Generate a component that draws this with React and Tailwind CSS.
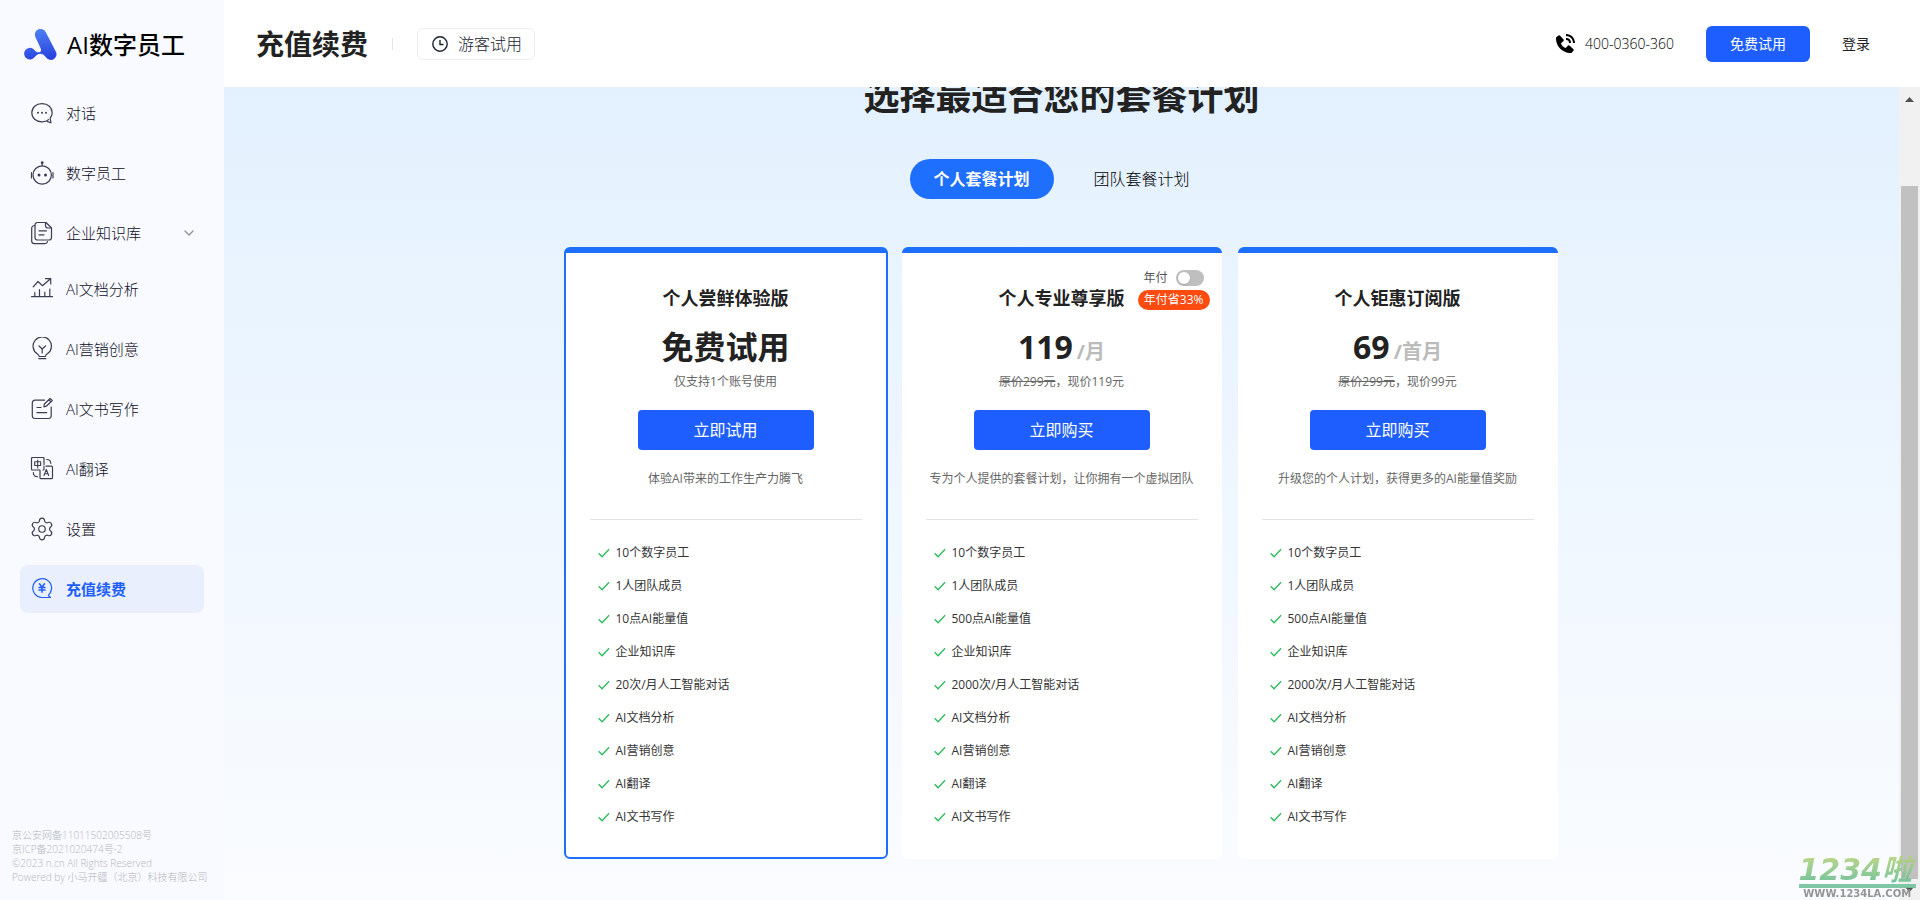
import { useState } from 'react'
import { ChevronDown, Settings } from 'lucide-react'
import { BiSolidPhoneCall } from 'react-icons/bi'

const NAV = [
  { id: 'chat',      label: '对话',       icon: ChatIcon },
  { id: 'staff',     label: '数字员工',   icon: RobotIcon },
  { id: 'knowledge', label: '企业知识库', icon: DocsIcon, children: true },
  { id: 'analysis',  label: 'AI文档分析', icon: ChartIcon },
  { id: 'marketing', label: 'AI营销创意', icon: BulbIcon },
  { id: 'writing',   label: 'AI文书写作', icon: EditIcon },
  { id: 'translate', label: 'AI翻译',     icon: TranslateIcon },
  { id: 'settings',  label: '设置',       icon: GearIcon },
  { id: 'recharge',  label: '充值续费',   icon: RechargeIcon },
]

const PLANS = [
  {
    id: 'trial', name: '个人尝鲜体验版', price: '免费试用', note: '仅支持1个账号使用', action: '立即试用',
    desc: '体验AI带来的工作生产力腾飞',
    features: ['10个数字员工', '1人团队成员', '10点AI能量值', '企业知识库', '20次/月人工智能对话', 'AI文档分析', 'AI营销创意', 'AI翻译', 'AI文书写作'],
  },
  {
    id: 'pro', name: '个人专业尊享版', price: '119', unit: '/月', was: '原价299元', note: '，现价119元', action: '立即购买', yearly: true,
    desc: '专为个人提供的套餐计划，让你拥有一个虚拟团队',
    features: ['10个数字员工', '1人团队成员', '500点AI能量值', '企业知识库', '2000次/月人工智能对话', 'AI文档分析', 'AI营销创意', 'AI翻译', 'AI文书写作'],
  },
  {
    id: 'sub', name: '个人钜惠订阅版', price: '69', unit: '/首月', was: '原价299元', note: '，现价99元', action: '立即购买',
    desc: '升级您的个人计划，获得更多的AI能量值奖励',
    features: ['10个数字员工', '1人团队成员', '500点AI能量值', '企业知识库', '2000次/月人工智能对话', 'AI文档分析', 'AI营销创意', 'AI翻译', 'AI文书写作'],
  },
]

function Icon({ children }) {
  return (
    <svg className="size-6 shrink-0 text-[#3b3c53] group-aria-[current=page]:text-[#1e5eff]" viewBox="0 0 24 24" fill="none" stroke="currentColor" strokeWidth="1.2" strokeLinecap="round" strokeLinejoin="round" aria-hidden="true">
      {children}
    </svg>
  )
}

function ChatIcon() {
  return (
    <Icon>
      <path d="M18.6 18.6C16.9 20.200 14.6 20.800 12 20.800 6 20.800 1.8 17 1.8 11.800S6 2.600 12 2.600 22.200 6.600 22.200 11.800c0 2-.7 3.700-2.100 5.300l.9 4.700-3.600-1.200"/>
      <g fill="currentColor" stroke="none"><circle cx="8" cy="11.8" r="1"/><circle cx="12" cy="11.8" r="1"/><circle cx="16" cy="11.8" r="1"/></g>
    </Icon>
  )
}

function RobotIcon() {
  return (
    <Icon>
      <circle cx="12.2" cy="14" r="9.2"/>
      <path d="M12.200 4.500V1.500M1.500 11.500v5.500M23 11.500v5.500"/>
      <g fill="currentColor" stroke="none"><circle cx="12.2" cy="1.7" r="1.4"/><circle cx="9" cy="14" r="1.5"/><circle cx="15.5" cy="14" r="1.5"/></g>
    </Icon>
  )
}

function DocsIcon() {
  return (
    <Icon>
      <path d="M16 1.500H7.500A2.500 2.500 0 0 0 5 4v12.500A2.500 2.500 0 0 0 7.500 19H19a2.500 2.500 0 0 0 2.500-2.500V7Z"/>
      <path d="M15.500 1.500v3A2.500 2.500 0 0 0 18 7h3.500"/>
      <path d="M5 4.500C3 4.500 1.700 5.500 1.700 7.500V20c0 1.800 1 2.700 2.700 2.700h10.500c1.300 0 2.300-.7 2.600-2"/>
      <path d="M9 9.800h7.500M9 13.800h5"/>
    </Icon>
  )
}

function ChartIcon() {
  return (
    <Icon>
      <path d="M1.500 19.700h21M4.800 19.500v-4M9.500 19.500V12.500M14.800 19.500v-4.500M19.800 19.500v-7.500"/>
      <path d="M3.200 9.800 8 4.500l4.500 4.200L20.500 1.800M15.500 1.700h5.200V7"/>
    </Icon>
  )
}

function BulbIcon() {
  return (
    <Icon>
      <path d="M9.200 19.500c-.3-1.300-.9-1.900-2-2.700A9.200 9.200 0 1 1 17.300 16.800c-1.100.8-1.700 1.400-2 2.700Z"/>
      <path d="M8.800 21.700h7M12.200 16v-4M9 9l3.200 3L15.500 9"/>
    </Icon>
  )
}

function EditIcon() {
  return (
    <Icon>
      <path d="M14.500 3.200H5A2.700 2.700 0 0 0 2.300 6v13A2.700 2.700 0 0 0 5 21.500h13.500A2.700 2.700 0 0 0 21.200 19V10"/>
      <path d="m14 9.200.4-2.200L20 1.500l2.300 2-6 5.700-2.300.6ZM18.700 2.800l2.300 2"/>
      <path d="M7 10.500h4M7 15.700h9.700"/>
    </Icon>
  )
}

function TranslateIcon() {
  return (
    <Icon>
      <path d="M10 13H2.500a1 1 0 0 1-1-1V1.500a1 1 0 0 1 1-1H13a1 1 0 0 1 1 1V7.500M14 9v3a1 1 0 0 1-1 1M16 9.200h5.500a1 1 0 0 1 1 1V20.700a1 1 0 0 1-1 1H11a1 1 0 0 1-1-1V13"/>
      <path d="M16.800 2.500c2.200 0 3.900 1.500 4 3.800M3.300 15.700c.2 2.300 1.700 3.900 4 4"/>
      <path d="M4.700 4.800h6v3.700h-6ZM7.700 3v8M14 18.500l2.300-6 2.400 6M14.800 16.700h3.100" strokeWidth="1.1"/>
    </Icon>
  )
}

function GearIcon() {
  return <Settings className="-mx-px size-[26px] shrink-0 text-[#3b3c53]" strokeWidth={1.1} aria-hidden="true"/>
}

function RechargeIcon() {
  return (
    <Icon>
      <path d="M18.800 17.800A9.400 9.400 0 1 0 12 20.500h8.500l-2-1.800M20.300 15.500a9.400 9.400 0 0 0 .8-2.500"/>
      <path d="m9.500 6.800 2.500 3.500 2.500-3.500M12 10.300v5M9 10.500h6M9 13h6" strokeWidth="1.5"/>
    </Icon>
  )
}

function ClockIcon() {
  return (
    <svg className="size-4" viewBox="0 0 16 16" fill="none" stroke="currentColor" strokeWidth="1.4" aria-hidden="true">
      <circle cx="8" cy="8" r="7.2"/>
      <path d="M8 4v4.500h3.500"/>
    </svg>
  )
}

function Logo() {
  return (
    <svg className="h-[31px] w-[33px]" viewBox="0 0 33 31" aria-hidden="true">
      <defs>
        <linearGradient id="logo" gradientUnits="userSpaceOnUse" x1="14" y1="0" x2="20" y2="31">
          <stop offset="0" stopColor="#4f80f2"/>
          <stop offset="1" stopColor="#2742df"/>
        </linearGradient>
      </defs>
      <path fill="url(#logo)" d="M11.500 8.200A5.700 5.700 0 0 1 21.700 3L31.500 22A5.600 5.600 0 0 1 22.200 28.500C20.500 26.200 18.500 24.800 16.300 24.800 14 24.800 12.500 26 10.500 28.200A5.800 5.800 0 1 1 9.300 19.900C11.300 21.800 12.500 23.300 14.500 23.300 16.600 23.300 17.600 21.600 16.700 19.500Z"/>
    </svg>
  )
}

function Sidebar() {
  return (
    <aside className="flex w-56 shrink-0 flex-col bg-[#f9faff]">
      <a href="#home" className="flex h-[89px] items-center gap-2.5 pl-6 text-2xl font-medium text-black">
        <Logo/>
        AI数字员工
      </a>
      <nav className="flex flex-col gap-3 px-5">
        {NAV.map(({ id, label, icon: NavIcon, children }) => (
          <a key={id} href={`#${id}`} aria-current={id === 'recharge' ? 'page' : undefined}
            className={`group flex h-12 items-center gap-3 rounded-lg pr-[7px] pl-2.5 text-[15px] ${id === 'recharge' ? 'bg-[#e9effc] font-bold text-[#1e5eff]' : 'font-light text-[#0c0d26]'} ${children ? '-mb-1' : ''}`}>
            <NavIcon/>
            {label}
            {children && <ChevronDown className="ml-auto size-4 text-[#8f909d]" aria-hidden="true"/>}
          </a>
        ))}
      </nav>
      <footer className="mt-auto pb-4 pl-3 text-[10px] leading-[14px] font-light whitespace-nowrap text-[#b4b5b9]">
        <p>京公安网备11011502005508号</p>
        <p>京ICP备2021020474号-2</p>
        <p>©2023 n.cn All Rights Reserved</p>
        <p>Powered by 小马开疆（北京）科技有限公司</p>
      </footer>
    </aside>
  )
}

function Header() {
  return (
    <header className="flex h-[87px] shrink-0 items-center bg-white pr-[50px] pl-8 text-[#222]">
      <h1 className="text-[28px] font-bold">充值续费</h1>
      <span className="mx-6 h-3 w-px bg-[#e2e3e6]"/>
      <button className="flex h-8 items-center gap-2.5 rounded-md border border-[#ececee] pr-3 pl-3.5 text-base font-light text-[#1a2230]">
        <ClockIcon/>
        游客试用
      </button>
      <div className="ml-auto flex items-center text-sm">
        <BiSolidPhoneCall className="mr-2 size-6 text-black" aria-hidden="true"/>
        <span className="font-light text-black">400-0360-360</span>
        <button className="mx-8 h-9 w-26 rounded-md bg-[#1e5eff] text-white">免费试用</button>
        <a href="#login">登录</a>
      </div>
    </header>
  )
}

function PlanCard({ plan, selected, onSelect }) {
  const [yearly, setYearly] = useState(false)
  return (
    <section onClick={onSelect}
      className={`relative rounded-md border-t-6 border-[#1f6fff] bg-white px-6 pt-8 text-center ${selected ? '-mx-0.5 border-x-2 border-b-2 pb-6' : 'pb-[26px]'}`}>
      {plan.yearly && (
        <div className="absolute top-[17px] right-3 flex flex-col items-end gap-1 text-xs leading-5">
          <label className="mr-1.5 flex h-4 items-center gap-2 text-[#555]">
            年付
            <input type="checkbox" checked={yearly} onChange={e => setYearly(e.target.checked)}
              className="h-4 w-7 appearance-none rounded-full bg-[#bfbfbf] before:m-0.5 before:block before:size-3 before:rounded-full before:bg-white before:shadow before:content-[''] checked:bg-[#1e5eff] checked:before:ml-3.5"/>
          </label>
          <span className="rounded-full bg-[#ff4a10] px-1.5 text-white">年付省33%</span>
        </div>
      )}
      <h3 className="text-lg leading-[26px] font-bold text-[#222]">{plan.name}</h3>
      <div className="mt-4 flex h-10 items-baseline justify-center gap-1 text-[32px] leading-10 font-bold text-[#222]">
        {plan.price}
        {plan.unit && <span className="text-xl leading-none text-[#bbb]">{plan.unit}</span>}
      </div>
      <p className="mt-1 text-xs leading-[22px] text-[#666]">
        {plan.was && <s>{plan.was}</s>}{plan.note}
      </p>
      <button className="mt-[17px] h-10 w-44 rounded bg-[#1e5eff] text-base text-white">{plan.action}</button>
      <p className="mt-5 text-xs leading-[18px] whitespace-nowrap text-[#666]">{plan.desc}</p>
      <hr className="mt-[31px] border-[#e2e2e2]"/>
      <ul className="mt-4 pl-2 text-left text-xs leading-[33px] text-[#333]">
        {plan.features.map(f => (
          <li key={f} className="flex items-center gap-1.5">
            <svg className="size-3" viewBox="0 0 12 12" fill="none" stroke="#2dbb5d" strokeWidth="1.3" aria-hidden="true">
              <path d="m.6 6.300 3.500 3.500 7-7.600"/>
            </svg>
            {f}
          </li>
        ))}
      </ul>
    </section>
  )
}

function ScrollBar() {
  return (
    <div className="flex w-[21px] shrink-0 flex-col items-center bg-[#f1f1f1]" aria-hidden="true">
      <svg className="mt-2.5 mb-21 h-[5px] w-[9px]" viewBox="0 0 9 5" fill="#505050"><path d="M0 5 4.500 0 9 5Z"/></svg>
      <div className="w-[17px] flex-1 bg-[#c1c1c1]"/>
      <svg className="my-2 h-[5px] w-[9px]" viewBox="0 0 9 5" fill="#505050"><path d="M0 0 4.500 5 9 0Z"/></svg>
    </div>
  )
}

function SiteMark() {
  return (
    <div className="absolute right-1 bottom-0 flex flex-col items-center opacity-90">
      <div className="bg-linear-to-b from-[#b5d27a] to-[#62bd92] bg-clip-text pr-1 font-['DejaVu_Sans','Noto_Sans_CJK_SC',sans-serif] text-[30px] leading-7 font-bold whitespace-nowrap text-transparent italic">1234啦</div>
      <div className="h-1 w-full bg-[#72c39a]"/>
      <div className="font-['DejaVu_Sans',sans-serif] text-[10px] leading-3 font-bold text-[#8a8a8a]">WWW.1234LA.COM</div>
    </div>
  )
}

export default function App() {
  const [tab, setTab]           = useState('personal')
  const [selected, setSelected] = useState('trial')

  return (
    <div className="relative flex h-screen overflow-hidden font-['Open_Sans','Noto_Sans_CJK_SC',sans-serif]">
      <Sidebar/>
      <div className="flex min-w-0 flex-1 flex-col">
        <Header/>
        <div className="flex min-h-0 flex-1">
          <main className="min-w-0 flex-1 overflow-hidden bg-linear-to-b from-[#e3f1fe] to-[#fafcff]">
            <h2 className="-mt-4 text-center text-4xl leading-[52px] font-bold text-[#222]">选择最适合您的套餐计划</h2>
            <div className="mt-9 flex justify-center gap-4">
              {[['personal', '个人套餐计划'], ['team', '团队套餐计划']].map(([id, label]) => (
                <button key={id} onClick={() => setTab(id)}
                  className={`h-10 w-36 rounded-full text-base ${tab === id ? 'bg-[#1f6fff] font-bold text-white' : 'font-light text-black'}`}>
                  {label}
                </button>
              ))}
            </div>
            <div className="mx-auto mt-12 grid max-w-[992px] grid-cols-3 gap-4">
              {PLANS.map(p => (
                <PlanCard key={p.id} plan={p} selected={selected === p.id} onSelect={() => setSelected(p.id)}/>
              ))}
            </div>
          </main>
          <ScrollBar/>
        </div>
      </div>
      <SiteMark/>
    </div>
  )
}
